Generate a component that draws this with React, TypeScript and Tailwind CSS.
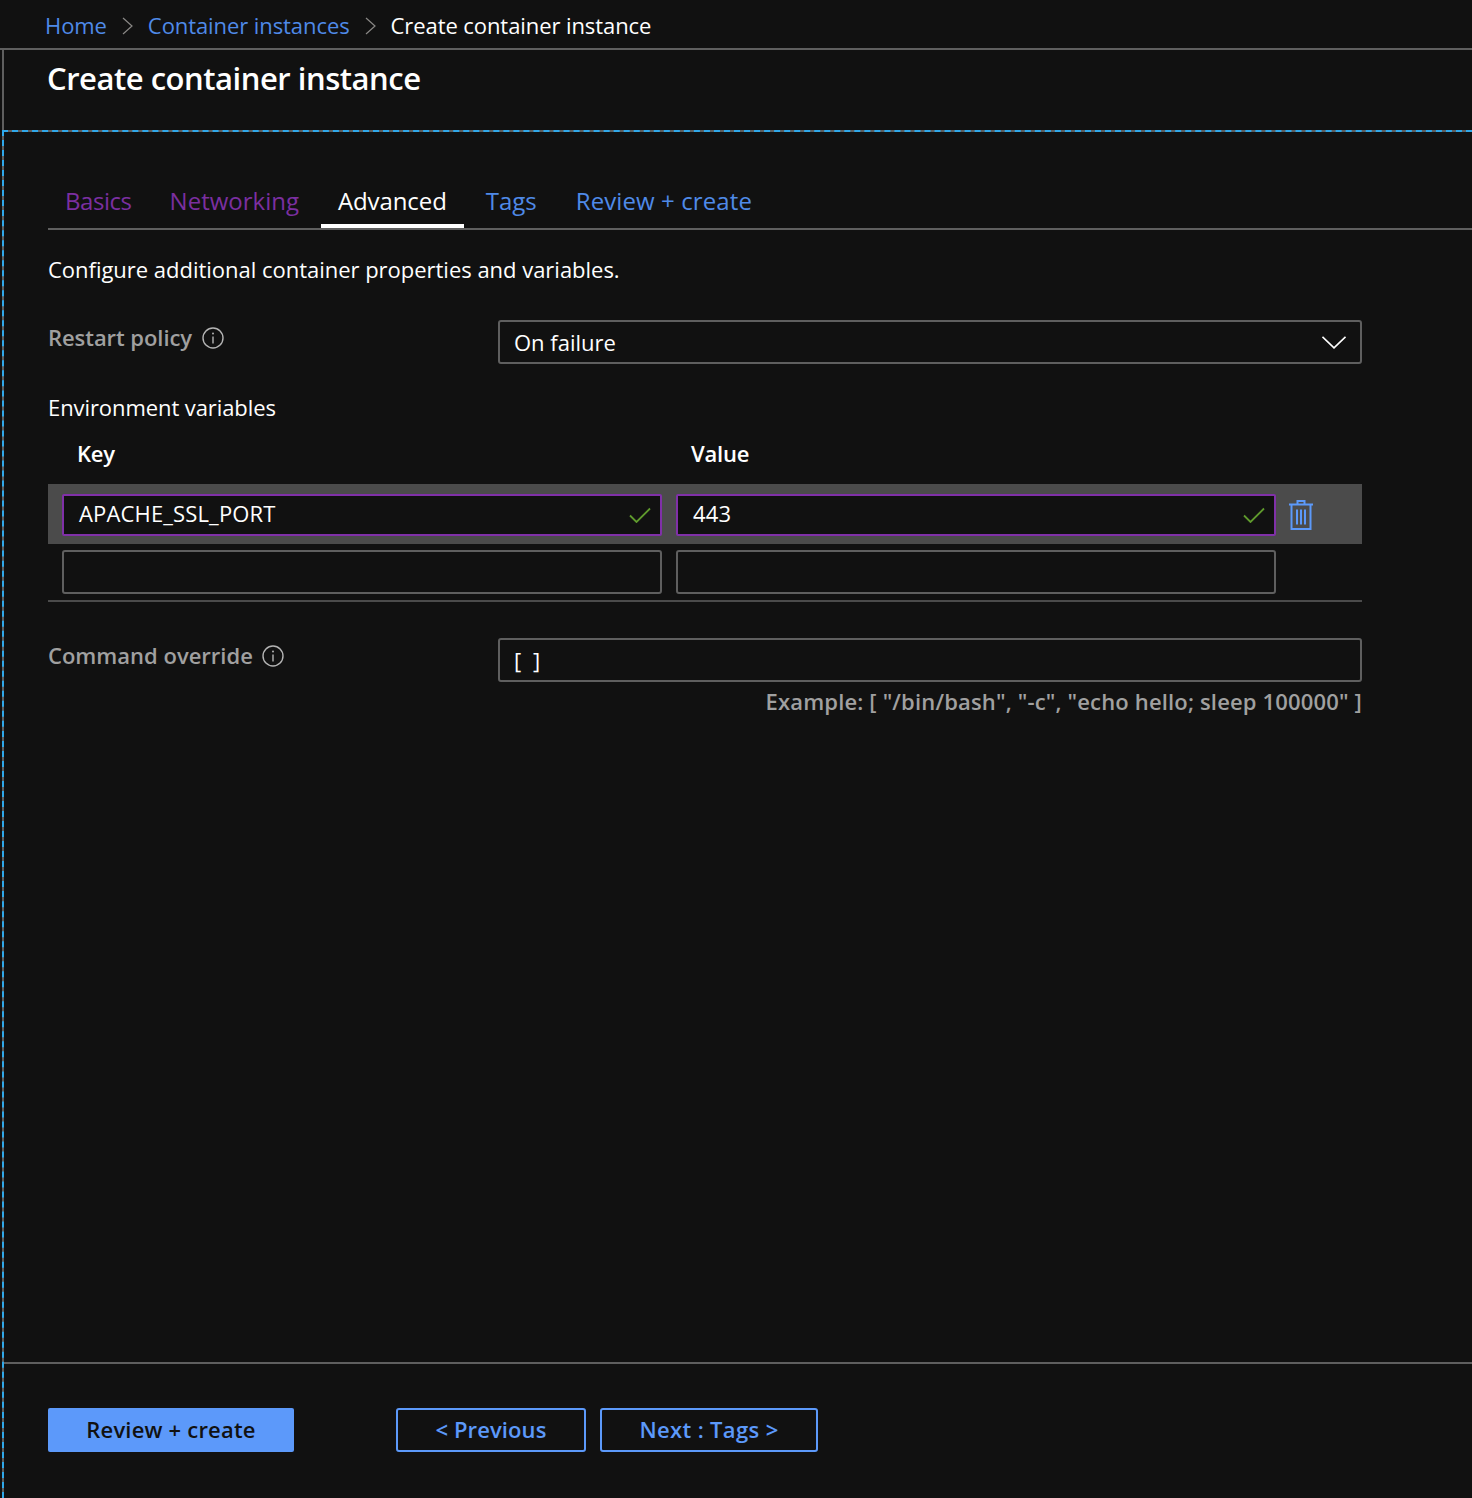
const font = "font-['Open_Sans',sans-serif]";

function Chevron() {
  return (
    <svg width="11" height="22" viewBox="0 0 11 22" fill="none" className="text-[#8a8886]">
      <path d="M1 3l9 8-9 8" stroke="currentColor" strokeWidth="1.2" />
    </svg>
  );
}

function InfoIcon() {
  return (
    <svg width="22" height="22" viewBox="0 0 22 22" fill="none" className="text-[#b4b4b4]">
      <circle cx="11" cy="11" r="10" stroke="currentColor" strokeWidth="1.4" />
      <path d="M11 9.5v7" stroke="currentColor" strokeWidth="1.4" />
      <circle cx="11" cy="6.6" r="1" fill="currentColor" />
    </svg>
  );
}

function Check() {
  return (
    <svg width="22" height="16" viewBox="0 0 22 16" fill="none" className="text-[#5f9a2d]">
      <path d="M1 8.5l6.5 6.5L21 1.5" stroke="currentColor" strokeWidth="1.8" />
    </svg>
  );
}

function Trash() {
  return (
    <svg width="24" height="30" viewBox="0 0 24 30" fill="none" className="text-[#5c99fa] -ml-[1px]">
      <path d="M0 4.500h24M8.500 4V1h7V4M2.500 5v24h19V5" stroke="currentColor" strokeWidth="2" />
      <path d="M8 9.500v15M12 9.500v15M16 9.500v15" stroke="currentColor" strokeWidth="2" />
    </svg>
  );
}

function ValidInput({ value }: { value: string }) {
  return (
    <div className="w-[600px] h-[42px] flex items-center justify-between pl-[15px] pr-[9px] bg-[#111111] border-2 border-[#8030a8] rounded-[2px] text-[22px] text-white">
      <span className="tracking-[0.15px] mb-[4px]">{value}</span>
      <Check />
    </div>
  );
}

function EmptyInput() {
  return <div className="w-[600px] h-[44px] border-2 border-[#5f5f5f] rounded-[3px]" />;
}

export default function App() {
  return (
    <div className={`w-[1472px] h-[1498px] bg-[#111111] overflow-hidden flex flex-col ${font}`}>
      {/* Breadcrumb */}
      <div className="h-[48px] flex items-center pl-[45px] pt-[3px] text-[22px] tracking-[-0.08px]">
        <span className="text-[#4f8ae8]">Home</span>
        <span className="mx-[15px]"><Chevron /></span>
        <span className="text-[#4f8ae8]">Container instances</span>
        <span className="mx-[15px]"><Chevron /></span>
        <span className="text-white">Create container instance</span>
      </div>

      <div className="flex-1 flex flex-col border-t-2 border-[#5f5f5f]">
        {/* Title */}
        <div className="h-[80px] ml-[2px] pl-[43px] border-l-2 border-[#5f5f5f]">
          <h1 className="text-[31px] leading-[56px] font-semibold text-white tracking-[-0.48px]">Create container instance</h1>
        </div>

        {/* Focused blade content */}
        <div className="flex-1 ml-[2px] flex flex-col bg-[#5f5f5f] border-t-2 border-l-2 border-dashed border-[#2fa8ea]">
          <div className="flex-1 flex flex-col bg-[#111111] pl-[44px]">
            {/* Tabs */}
            <div className="mt-[48px] h-[50px] flex items-start border-b-2 border-[#5f5f5f] text-[24px]">
              <div className="h-[48px] px-[17px] pt-[5px] leading-[32px] text-[#7b2fa0] tracking-[-0.45px]">Basics</div>
              <div className="h-[48px] ml-[4px] px-[17px] pt-[5px] leading-[32px] text-[#7b2fa0]">Networking</div>
              <div className="h-[48px] ml-[5px] px-[17px] pt-[5px] leading-[32px] text-white border-b-4 border-white tracking-[-0.1px]">Advanced</div>
              <div className="h-[48px] ml-[5px] px-[17px] pt-[5px] leading-[32px] text-[#4f8ae8]">Tags</div>
              <div className="h-[48px] ml-[5px] px-[17px] pt-[5px] leading-[32px] text-[#4f8ae8] tracking-[0.1px]">Review + create</div>
            </div>

            <p className="mt-[23px] text-[22px] leading-[32px] text-white tracking-[-0.02px]">Configure additional container properties and variables.</p>

            {/* Restart policy */}
            <div className="mt-[35px] flex items-start">
              <div className="w-[450px] flex items-center gap-[10px] h-[36px] text-[22px] font-semibold text-[#a0a0a0] tracking-[-0.06px]">
                <span className="mb-[2px]">Restart policy</span> <InfoIcon />
              </div>
              <div className="w-[864px] h-[44px] flex items-center justify-between pl-[14px] pr-[14px] border-2 border-[#5f5f5f] rounded-[3px] text-[22px] text-white">
                On failure
                <svg width="24" height="13" viewBox="0 0 24 13" fill="none" className="text-white">
                  <path d="M0.500 0.800L12 11.800L23.500 0.800" stroke="currentColor" strokeWidth="1.600" />
                </svg>
              </div>
            </div>

            {/* Environment variables */}
            <div className="mt-[27px] text-[22px] leading-[32px] text-white tracking-[-0.08px]">Environment variables</div>
            <div className="mt-[14px] w-[1314px] flex text-[22px] leading-[32px] font-semibold text-white tracking-[-0.2px]">
              <div className="w-[643px] pl-[29px]">Key</div>
              <div>Value</div>
            </div>
            <div className="mt-[15px] w-[1314px] h-[60px] flex items-center gap-[14px] pl-[14px] pt-[2px] bg-[#4b4b4b]">
              <ValidInput value="APACHE_SSL_PORT" />
              <ValidInput value="443" />
              <Trash />
            </div>
            <div className="mt-[6px] w-[1314px] flex gap-[14px] pl-[14px] pb-[6px] border-b-2 border-[#4b4b4b]">
              <EmptyInput />
              <EmptyInput />
            </div>

            {/* Command override */}
            <div className="mt-[36px] flex items-start">
              <div className="w-[450px] flex items-center gap-[9px] h-[36px] text-[22px] font-semibold text-[#a0a0a0]">
                <span className="mb-[2px]">Command override</span> <InfoIcon />
              </div>
              <div className="w-[864px] h-[44px] flex items-center pl-[14px] border-2 border-[#5f5f5f] rounded-[3px] text-[22px] text-white">
                <span className="tracking-[3px]">[ ]</span>
              </div>
            </div>
            <div className="mt-[3px] w-[1314px] text-right text-[22px] leading-[32px] font-semibold text-[#a0a0a0] tracking-[0.16px]">
              Example: [ "/bin/bash", "-c", "echo hello; sleep 100000" ]
            </div>

            <div className="flex-1" />

            {/* Footer */}
            <div className="-ml-[44px] h-[136px] pl-[44px] pt-[44px] border-t-2 border-[#5f5f5f] flex items-start text-[22px] font-semibold">
              <button className="w-[246px] h-[44px] pb-[2px] bg-[#5c99fa] rounded-[2px] text-[#111111] tracking-[0.2px]">Review + create</button>
              <button className="ml-[102px] w-[190px] h-[44px] pb-[2px] border-2 border-[#5c99fa] rounded-[3px] text-[#5c99fa] tracking-[0.1px]">&lt; Previous</button>
              <button className="ml-[14px] w-[218px] h-[44px] pb-[2px] border-2 border-[#5c99fa] rounded-[3px] text-[#5c99fa] tracking-[0.35px]">Next : Tags &gt;</button>
            </div>
          </div>
        </div>
      </div>
    </div>
  );
}
